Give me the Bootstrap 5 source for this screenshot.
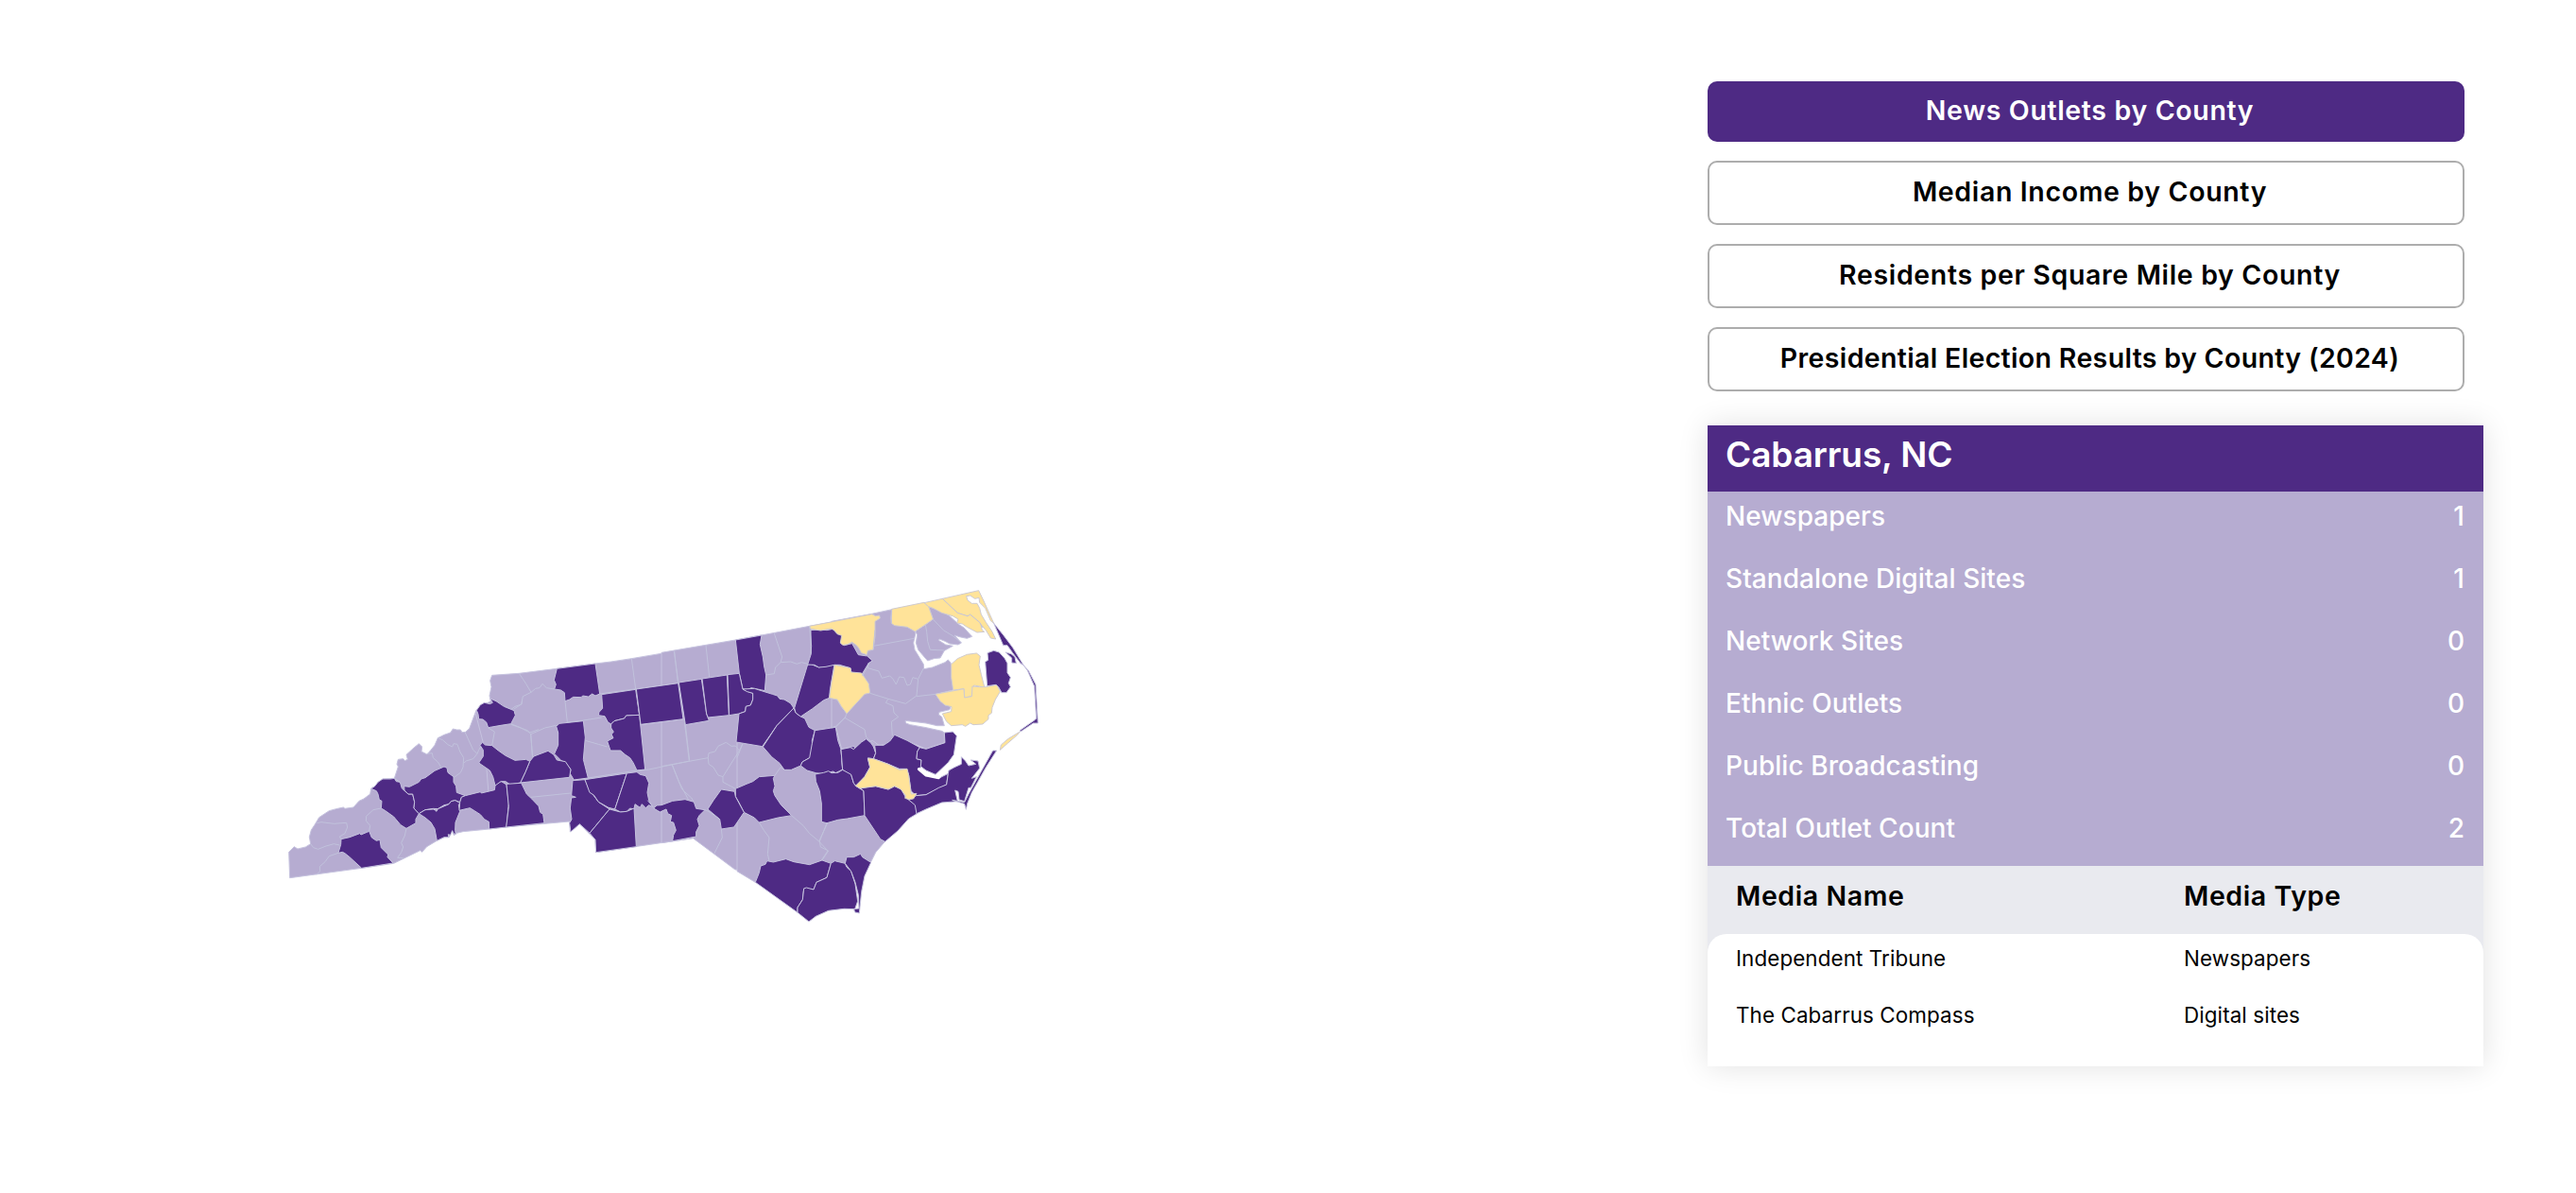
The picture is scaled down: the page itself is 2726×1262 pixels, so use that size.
<!DOCTYPE html>
<html lang="en">
<head>
    <meta charset="UTF-8">
    <title>News Outlets by County</title>
    <meta name="viewport" content="width=device-width, initial-scale=1">

    <!-- Bootstrap CSS -->
    <link href="https://cdn.jsdelivr.net/npm/bootstrap@5.3.2/dist/css/bootstrap.min.css" rel="stylesheet">

    <style>
        body {
            background: #fff;
            color: #000;
            font-family: 'Inter', 'Open Sans', sans-serif;
        }

        .map-panel {
            width: 1807px;
            padding: 610px 0 0 300px;
        }

        .side-panel {
            width: 821px;
            padding: 86px 0 60px;
        }

        .layer-list {
            width: 801px;
            gap: 20px;
            margin-bottom: 36px;
        }

        .layer-btn {
            --bs-btn-color: #000;
            --bs-btn-bg: #fff;
            --bs-btn-border-color: #adadad;
            --bs-btn-border-width: 2px;
            --bs-btn-border-radius: 10px;
            --bs-btn-hover-bg: #f3f0f8;
            --bs-btn-active-bg: #4e2a84;
            --bs-btn-active-color: #fff;
            height: 68px;
            padding: 0 0 2px 8px;
            font-size: 28.5px;
            font-weight: 600;
            letter-spacing: .65px;
        }

        .layer-btn.active {
            height: 64px;
            border: 0;
        }

        .layer-btn:last-child {
            letter-spacing: .35px;
        }

        .county-card {
            box-shadow: 0 0 30px rgba(0, 0, 0, .12);
        }

        .county-title {
            background: #4e2a84;
            height: 70px;
            padding-left: 19px;
            font-size: 37px;
            font-weight: 600;
            letter-spacing: -.1px;
            line-height: 62px;
        }

        .county-stats {
            background: #b6acd1;
            font-size: 28px;
            font-weight: 500;
            letter-spacing: .05px;
        }

        .stat-line {
            height: 66px;
            padding: 0 20px 0 19px;
            line-height: 52px;
        }

        .media-area {
            background: #e9eaef;
        }

        .media-head {
            height: 72px;
            padding-left: 30px;
            font-size: 28.5px;
            font-weight: 600;
            letter-spacing: .6px;
            line-height: 64px;
        }

        .media-body {
            background: #fff;
            height: 140px;
            border-radius: 20px 20px 0 0;
            padding-left: 30px;
            font-size: 22.4px;
            letter-spacing: .1px;
        }

        .media-line {
            height: 60px;
            line-height: 52px;
        }

        .media-name {
            width: 474px;
        }

        .nc-map path {
            vector-effect: non-scaling-stroke;
            stroke-linejoin: round;
        }

        .land { fill: #b6acd1; stroke: #c6c3df; stroke-width: 1; }
        .many { fill: #4e2a84; stroke: #c6c3df; stroke-width: 1; }
        .none { fill: #ffe399; stroke: #cfcbd0; stroke-width: 1; }
        .edge { fill: none; stroke: #c1c2dc; stroke-width: 1; }
        .water { fill: none; stroke: #fff; stroke-width: 3; stroke-linecap: round; }
    </style>
</head>

<body>

<div class="d-flex align-items-start">
    <main class="map-panel flex-shrink-0">
        <svg class="nc-map d-block" width="810" height="380" viewBox="300 610 810 380" role="img" aria-label="North Carolina counties">
            <!-- land under the counties, west to east -->
            <g transform="translate(290 740) scale(.33333)">
                <path class="land" d="M47,484 64,467 75,474 100,468 116,458 112,436 118,414 130,396 143,374 175,353 197,347 220,342 225,346 252,342 270,322 285,315 305,300 308,283 320,275 345,252 382,250 394,213 390,205 394,190 410,188 415,194 424,190 420,175 445,152 460,140 470,150 468,165 486,174 498,160 510,145 520,122 540,112 560,105 568,93 580,96 592,96 597,104 608,103 620,92 632,60 642,34 900,0 900,380 683,411 600,419 575,425 572,432 565,418 556,437 540,437 517,448 485,467 470,484 464,479 380,520 278,535 50,566Z"/>
            </g>
            <g transform="translate(470 660) scale(.33333)">
                <path class="land" d="M100,285 130,255 148,245 144,228 150,200 146,180 152,163 238,157 358,142 480,126 530,120 595,110 730,87 790,77 790,680 482,725 480,685 430,635 400,660 398,627 150,649 130,400Z"/>
            </g>
            <g transform="translate(700 640) scale(.33333)">
                <path class="land" d="M0,151 141,127 235,111 360,88 470,67 620,40 620,840 234,840 100,740 0,755Z"/>
            </g>
            <g transform="translate(780 780) scale(.33333)">
                <path class="land" d="M0,0 480,0 440,100 400,200 470,330 440,365 425,395 400,400 100,440 58,460 0,425Z"/>
            </g>
            <g transform="translate(880 600) scale(.33333)">
                <path class="land" d="M0,172 128,148 192,134 262,185 266,213 260,240 264,262 275,280 292,308 293,323 320,318 360,302 370,294 378,303 384,330 386,390 330,403 345,425 378,440 375,452 342,460 340,468 350,475 358,503 335,503 300,495 250,489 234,487 236,495 250,500 300,509 350,520 358,525 358,557 300,577 260,560 200,533 190,555 170,563 150,565 130,550 110,560 95,570 66,576 32,577 13,505 0,510Z"/>
                <path class="land" d="M266,203 298,182 322,165 308,125 345,138 375,155 402,180 420,192 446,220 430,226 410,222 390,216 412,240 402,246 375,243 360,235 342,228 340,232 362,246 385,250 358,265 345,288 325,290 305,297 290,280 275,262 268,240 272,215Z"/>
            </g>

            <!-- mountains -->
            <g transform="translate(290 740) scale(.33333)">
                <path class="many" d="M308,283 320,275 330,262 345,252 370,252 382,250 388,260 400,262 406,282 415,290 426,300 440,300 446,325 444,345 460,362 450,380 450,392 420,409 402,398 380,372 352,352 340,345 342,322 334,318 330,300 325,290Z"/>
                <path class="many" d="M413,275 430,277 460,262 467,252 480,248 510,226 540,213 549,217 552,232 570,245 570,262 578,275 580,295 607,305 595,310 590,326 575,320 562,323 555,332 540,335 520,347 505,346 480,350 460,362 444,345 446,325 440,300 426,300 414,288Z"/>
                <path class="many" d="M460,362 480,350 505,348 510,350 516,355 520,347 555,332 562,323 575,320 590,328 586,335 590,355 576,390 575,415 577,428 570,425 566,416 560,430 553,428 554,437 540,437 517,448 510,410 498,390 480,375Z"/>
                <path class="many" d="M590,326 595,310 607,305 655,293 658,297 700,287 702,273 710,263 722,260 738,270 745,330 738,405 683,411 682,388 668,380 655,365 622,344 588,352Z"/>
                <path class="many" d="M213,443 240,437 272,425 276,429 302,418 310,438 325,448 336,445 340,470 362,492 360,500 378,519 278,535 240,500 225,488 217,484 204,487 212,460Z"/>
                <path class="edge" d="M136,392 150,389 190,394 230,391 233,405 225,425 208,435 213,443M116,458 125,470 140,475 165,465 190,458 208,462M204,487 175,497 162,515 145,530 146,545 135,556M302,418 305,400 292,385 293,370 315,350 340,345M420,409 415,432 404,455 410,468 404,485 392,502 410,503M382,250 400,262M486,172 502,170 505,185 520,198 530,214M520,122 535,128 552,143 566,150 570,140 582,142 590,165 602,185 600,215 592,232 570,248M606,103 622,138 632,160 645,172 632,188 610,195 602,202M645,172 650,160 656,150M680,90 700,102 692,146M750,76 780,88 812,105 840,95M815,108 820,178M730,20 752,32 765,22 786,15 788,0"/>
            </g>

            <!-- western piedmont -->
            <g transform="translate(470 660) scale(.33333)">
                <path class="many" d="M103,274 115,257 128,250 145,254 154,250 146,237 165,245 190,262 222,275 226,290 212,317 180,322 140,329 134,312 123,303 110,302 108,286Z"/>
                <path class="many" d="M358,142 480,126 494,222 480,228 470,222 458,231 440,228 435,233 410,232 398,240 384,245 382,218 370,210 350,207 355,192 349,178Z"/>
                <path class="many" d="M500,224 608,208 620,289 578,291 572,300 540,308 530,318 520,312 510,293 490,290 492,280 503,268Z"/>
                <path class="many" d="M610,207 743,190 759,302 624,319Z"/>
                <path class="many" d="M530,318 540,308 572,300 578,291 620,289 638,462 612,465 600,440 590,425 575,415 560,402 528,402 518,372 537,362 531,350 538,343 530,330Z"/>
                <path class="many" d="M356,325 366,316 442,308 448,360 442,430 457,489 412,495 400,475 402,462 385,440 372,434 350,412 362,385 362,345Z"/>
                <path class="many" d="M272,436 285,420 330,403 348,415 358,432 385,437 402,462 398,487 242,504 258,470Z"/>
                <path class="many" d="M110,441 124,420 124,400 114,385 122,376 130,384 152,386 172,402 195,418 225,433 260,430 272,436 258,470 242,504 210,510 195,500 180,500 162,513 155,485 145,465Z"/>
                <path class="many" d="M198,508 245,505 262,540 278,555 300,578 305,598 314,604 318,632 197,645 205,580Z"/>
                <path class="many" d="M408,497 447,494 460,525 490,565 525,588 462,664 430,635 402,660 398,632 405,620 400,585 404,552 418,550 404,545Z"/>
                <path class="many" d="M447,494 580,474 542,588 522,583 490,565 475,543 462,535Z"/>
                <path class="many" d="M580,474 612,470 622,478 640,482 650,505 645,535 650,560 662,580 650,575 640,584 628,572 622,583 606,572 603,588 590,585 580,595 560,597 542,588Z"/>
                <path class="many" d="M525,588 560,597 580,595 603,585 610,707 482,725 480,685 462,664Z"/>
                <path class="edge" d="M238,157 250,175 260,190 276,217M222,270 245,255 250,230 276,217 290,205 303,203 312,190 325,203 350,207M384,245 391,312 442,306 500,297M356,322 320,330 275,350 265,338 212,319M275,350 281,423M595,110 608,207M730,87 743,188M494,222 743,188 780,182M448,370 490,382 518,390M457,489 600,467 650,462 780,435M624,319 762,302 778,435M724,447 745,500 775,557M275,550 402,537M646,560 665,583 700,573"/>
            </g>

            <!-- eastern piedmont -->
            <g transform="translate(700 640) scale(.33333)">
                <path class="many" d="M235,111 318,96 313,125 322,165 326,195 332,222 328,272 300,266 285,263 275,268 258,267 247,217Z"/>
                <path class="many" d="M-80,267 53,248 69,362 -66,379Z"/>
                <path class="many" d="M55,246 127,235 143,345 151,367 76,380Z"/>
                <path class="many" d="M129,234 208,222 214,350 148,357 143,345Z"/>
                <path class="many" d="M210,221 247,217 258,267 275,275 290,280 290,300 283,318 268,322 266,338 246,345 215,350Z"/>
                <path class="many" d="M258,267 295,265 320,273 352,283 368,288 375,298 390,300 410,312 420,327 366,383 320,449 237,435 246,345 266,338 268,322 283,318 290,300 290,280 272,275Z"/>
                <path class="many" d="M420,327 426,342 442,354 455,360 468,388 487,398 478,430 480,470 470,485 447,498 442,510 412,523 390,523 375,502 350,482 322,450 366,383Z"/>
                <path class="many" d="M464,189 475,188 500,198 522,190 549,188 535,270 533,295 515,302 478,330 442,354 426,342 422,327Z"/>
                <path class="many" d="M474,80 505,77 525,80 545,76 555,88 570,92 575,100 568,120 580,128 605,122 625,158 653,162 670,177 658,184 635,222 602,213 600,200 565,190 549,190 522,196 500,198 485,190 464,189 475,155Z"/>
                <path class="many" d="M487,398 553,388 560,430 570,458 575,522 565,527 553,533 545,528 515,536 490,533 462,525 442,510 447,498 470,485 478,440Z"/>
                <path class="many" d="M570,458 612,448 630,560 590,530 575,522Z"/>
                <path class="many" d="M235,583 270,568 290,560 310,545 360,541 355,550 360,575 355,590 360,605 380,635 413,668 370,675 310,690 295,675 262,658 245,625 235,608Z"/>
                <path class="many" d="M190,585 232,592 235,608 262,658 230,705 190,711 185,680 147,648 165,620Z"/>
                <path class="many" d="M-25,645 -15,636 0,635 35,622 75,617 103,625 110,646 138,650 120,668 114,680 120,700 110,720 110,735 35,749 38,730 46,715 38,690 28,688 32,668 20,662 15,648 -5,657Z"/>
                <path class="edge" d="M41,147 53,248M141,128 152,229M358,90 383,165 378,182 362,198 358,218 332,222M378,182 410,180 430,187 445,182 464,187M470,67 476,130 474,155M76,380 89,493M0,512 148,485M148,485 150,470 170,465 180,448 205,436 222,448 235,447 247,462 195,545 180,540 165,515 150,505ZM258,440 247,462M195,545 195,562 220,575 235,583M34,508 65,585 95,612 103,625M360,541 378,515 390,523M413,668 450,700 470,725 500,750M310,690 325,715 342,738 337,790 342,812M190,711 193,738 168,788M500,750 528,780 508,810M528,690 500,750M553,388 585,355M533,295 558,300 572,325 590,345M138,650 150,655 185,680"/>
            </g>

            <!-- south east and Carteret coast -->
            <g transform="translate(780 780) scale(.33333)">
                <path class="many" d="M58,460 70,430 75,408 90,403 95,392 115,396 155,386 180,395 230,404 270,390 298,400 285,445 252,460 243,483 212,480 208,515 192,540 192,556Z"/>
                <path class="many" d="M298,400 310,392 343,400 348,412 362,425 375,465 383,520 374,545 340,544 290,550 250,568 228,585 192,556 192,540 208,515 212,480 220,477 243,483 252,460 285,445Z"/>
                <path class="many" d="M348,380 370,380 392,370 398,380 425,397 405,440 395,490 388,558 374,555 371,545 387,543 385,500 375,460 362,425 343,400Z"/>
                <path class="many" d="M248,117 275,112 290,107 300,113 320,112 335,103 350,108 362,118 370,145 378,155 402,170 405,248 350,258 320,262 285,272 268,268 268,210 262,170 250,140Z"/>
                <path class="many" d="M330,38 360,32 370,38 395,15 410,5 425,18 433,30 440,50 433,68 415,66 422,95 405,125 378,155 370,145 362,118 335,103Z"/>
                <path class="many" d="M437,25 465,25 485,12 500,-8 540,10 580,32 572,45 570,68 585,72 583,95 575,100 600,120 640,130 670,115 665,150 620,172 600,182 568,185 552,170 545,120 538,100 515,100 480,85 433,68 440,50Z"/>
                <path class="many" d="M580,32 600,37 660,17 658,-15 685,-18 697,-5 688,55 670,80 630,118 600,105 583,92 585,72 570,68 572,45Z"/>
                <path class="many" d="M568,185 600,182 640,160 665,150 670,115 672,105 690,95 712,85 712,62 725,75 735,90 758,85 742,72 765,75 770,98 745,130 760,125 742,160 735,160 722,203 705,198 702,172 692,168 700,203 650,207 600,228 568,243 560,215 545,198Z"/>
                <path class="many" d="M390,160 440,155 480,165 500,155 520,162 535,190 565,215 570,243 545,258 510,297 470,331 455,323 405,248 402,170Z"/>
                <path class="none" d="M415,66 433,68 480,85 515,103 540,100 545,120 553,180 570,178 560,195 545,197 533,193 535,185 520,165 500,155 480,165 440,155 390,162 376,154 405,125 422,95Z"/>
                <path class="many" d="M683,199 722,206 735,180 812,42 824,42 790,95 745,175 731,210 727,229 722,211Z"/>
                <path class="edge" d="M285,272 270,310 262,330 265,348 290,360 270,390M0,65 18,20"/>
                <path class="water" d="M577,101 600,120 640,128 662,98"/>
            </g>

            <!-- north east and Outer Banks -->
            <g transform="translate(880 600) scale(.33333)">
                <path class="none" d="M-70,187 128,149 140,155 152,153 154,162 138,172 138,220 132,262 115,265 112,278 95,272 85,255 78,247 65,238 50,245 35,247 28,240 32,217 18,212 10,202 0,195 -35,201 -66,196Z"/>
                <path class="none" d="M191,133 294,112 308,125 322,165 298,182 265,204 240,190 200,185 190,178Z"/>
                <path class="none" d="M294,113 467,74 482,105 515,178 505,170 488,130 470,112 468,97 455,100 440,90 428,92 432,105 445,115 462,115 470,130 475,150 490,175 510,205 521,228 505,225 490,200 474,182 478,200 485,205 462,207 430,190 415,180 398,177 402,165 385,155 350,145 322,130 308,125Z"/>
                <path class="none" d="M10,310 60,320 62,333 95,336 118,370 122,399 105,403 48,465 30,440 18,420 -7,415 0,365Z"/>
                <path class="none" d="M380,308 400,290 430,277 460,273 472,282 468,310 475,340 486,383 470,378 452,375 445,410 422,414 420,386 386,390 380,350Z"/>
                <path class="none" d="M330,403 420,386 422,414 445,410 447,378 470,380 490,380 525,373 535,395 520,420 510,445 508,463 498,470 498,482 480,498 450,500 440,495 425,505 415,500 380,503 365,490 352,465 380,458 381,443 360,438 345,425Z"/>
                <path class="none" d="M535,580 538,564 560,545 598,522 590,532 560,558Z"/>
                <path class="many" d="M488,300 497,295 495,272 515,265 532,270 550,290 558,305 558,335 568,350 562,368 568,380 555,398 540,398 530,380 522,373 494,377Z"/>
                <path class="many" d="M515,178 545,215 575,255 610,312 600,305 575,272 558,248 545,248Z"/>
                <path class="many" d="M552,270 570,275 582,285 586,305 572,303 572,288Z"/>
                <path class="many" d="M610,312 625,328 648,372 655,495 640,495 600,522 598,518 645,485 650,480 644,378 622,328Z"/>
                <path class="edge" d="M191,136 188,162 190,178M133,250 262,226M133,262 133,250 138,200M298,182 302,205 305,235 313,262 358,264M322,165 355,200 385,218 412,240M352,100 400,145 432,155 440,150 470,175 480,192M118,304 115,320 150,330 160,352 185,345 195,355 205,372 215,348 230,350 240,375 250,372 258,350 275,355 270,408 235,433 180,418 122,400M118,304 112,320 98,345M292,320 275,355M270,410 330,403M180,418 172,430 195,440 198,462 212,475 190,490 193,535M48,465 42,478 105,515 110,540 135,562M42,478 13,505M0,510 13,505"/>
            </g>
        </svg>
    </main>

    <aside class="side-panel flex-shrink-0">
        <div class="layer-list d-flex flex-column">
            <button type="button" class="btn layer-btn active">News Outlets by County</button>
            <button type="button" class="btn layer-btn">Median Income by County</button>
            <button type="button" class="btn layer-btn">Residents per Square Mile by County</button>
            <button type="button" class="btn layer-btn">Presidential Election Results by County (2024)</button>
        </div>

        <div class="county-card">
            <h1 class="county-title text-white mb-0">Cabarrus, NC</h1>
            <div class="county-stats text-white">
                <div class="stat-line d-flex justify-content-between"><span>Newspapers</span><span>1</span></div>
                <div class="stat-line d-flex justify-content-between"><span>Standalone Digital Sites</span><span>1</span></div>
                <div class="stat-line d-flex justify-content-between"><span>Network Sites</span><span>0</span></div>
                <div class="stat-line d-flex justify-content-between"><span>Ethnic Outlets</span><span>0</span></div>
                <div class="stat-line d-flex justify-content-between"><span>Public Broadcasting</span><span>0</span></div>
                <div class="stat-line d-flex justify-content-between"><span>Total Outlet Count</span><span>2</span></div>
            </div>
            <div class="media-area">
                <div class="media-head d-flex"><span class="media-name">Media Name</span><span>Media Type</span></div>
                <div class="media-body">
                    <div class="media-line d-flex"><span class="media-name">Independent Tribune</span><span>Newspapers</span></div>
                    <div class="media-line d-flex"><span class="media-name">The Cabarrus Compass</span><span>Digital sites</span></div>
                </div>
            </div>
        </div>
    </aside>
</div>

<!-- Bootstrap JS Bundle -->
<script src="https://cdn.jsdelivr.net/npm/bootstrap@5.3.2/dist/js/bootstrap.bundle.min.js"></script>

<script>
    // Switch the highlighted map layer
    document.querySelectorAll('.layer-btn').forEach(btn => {
        btn.addEventListener('click', function () {
            document.querySelectorAll('.layer-btn').forEach(b => b.classList.remove('active'));
            this.classList.add('active');
        });
    });
</script>

</body>
</html>
